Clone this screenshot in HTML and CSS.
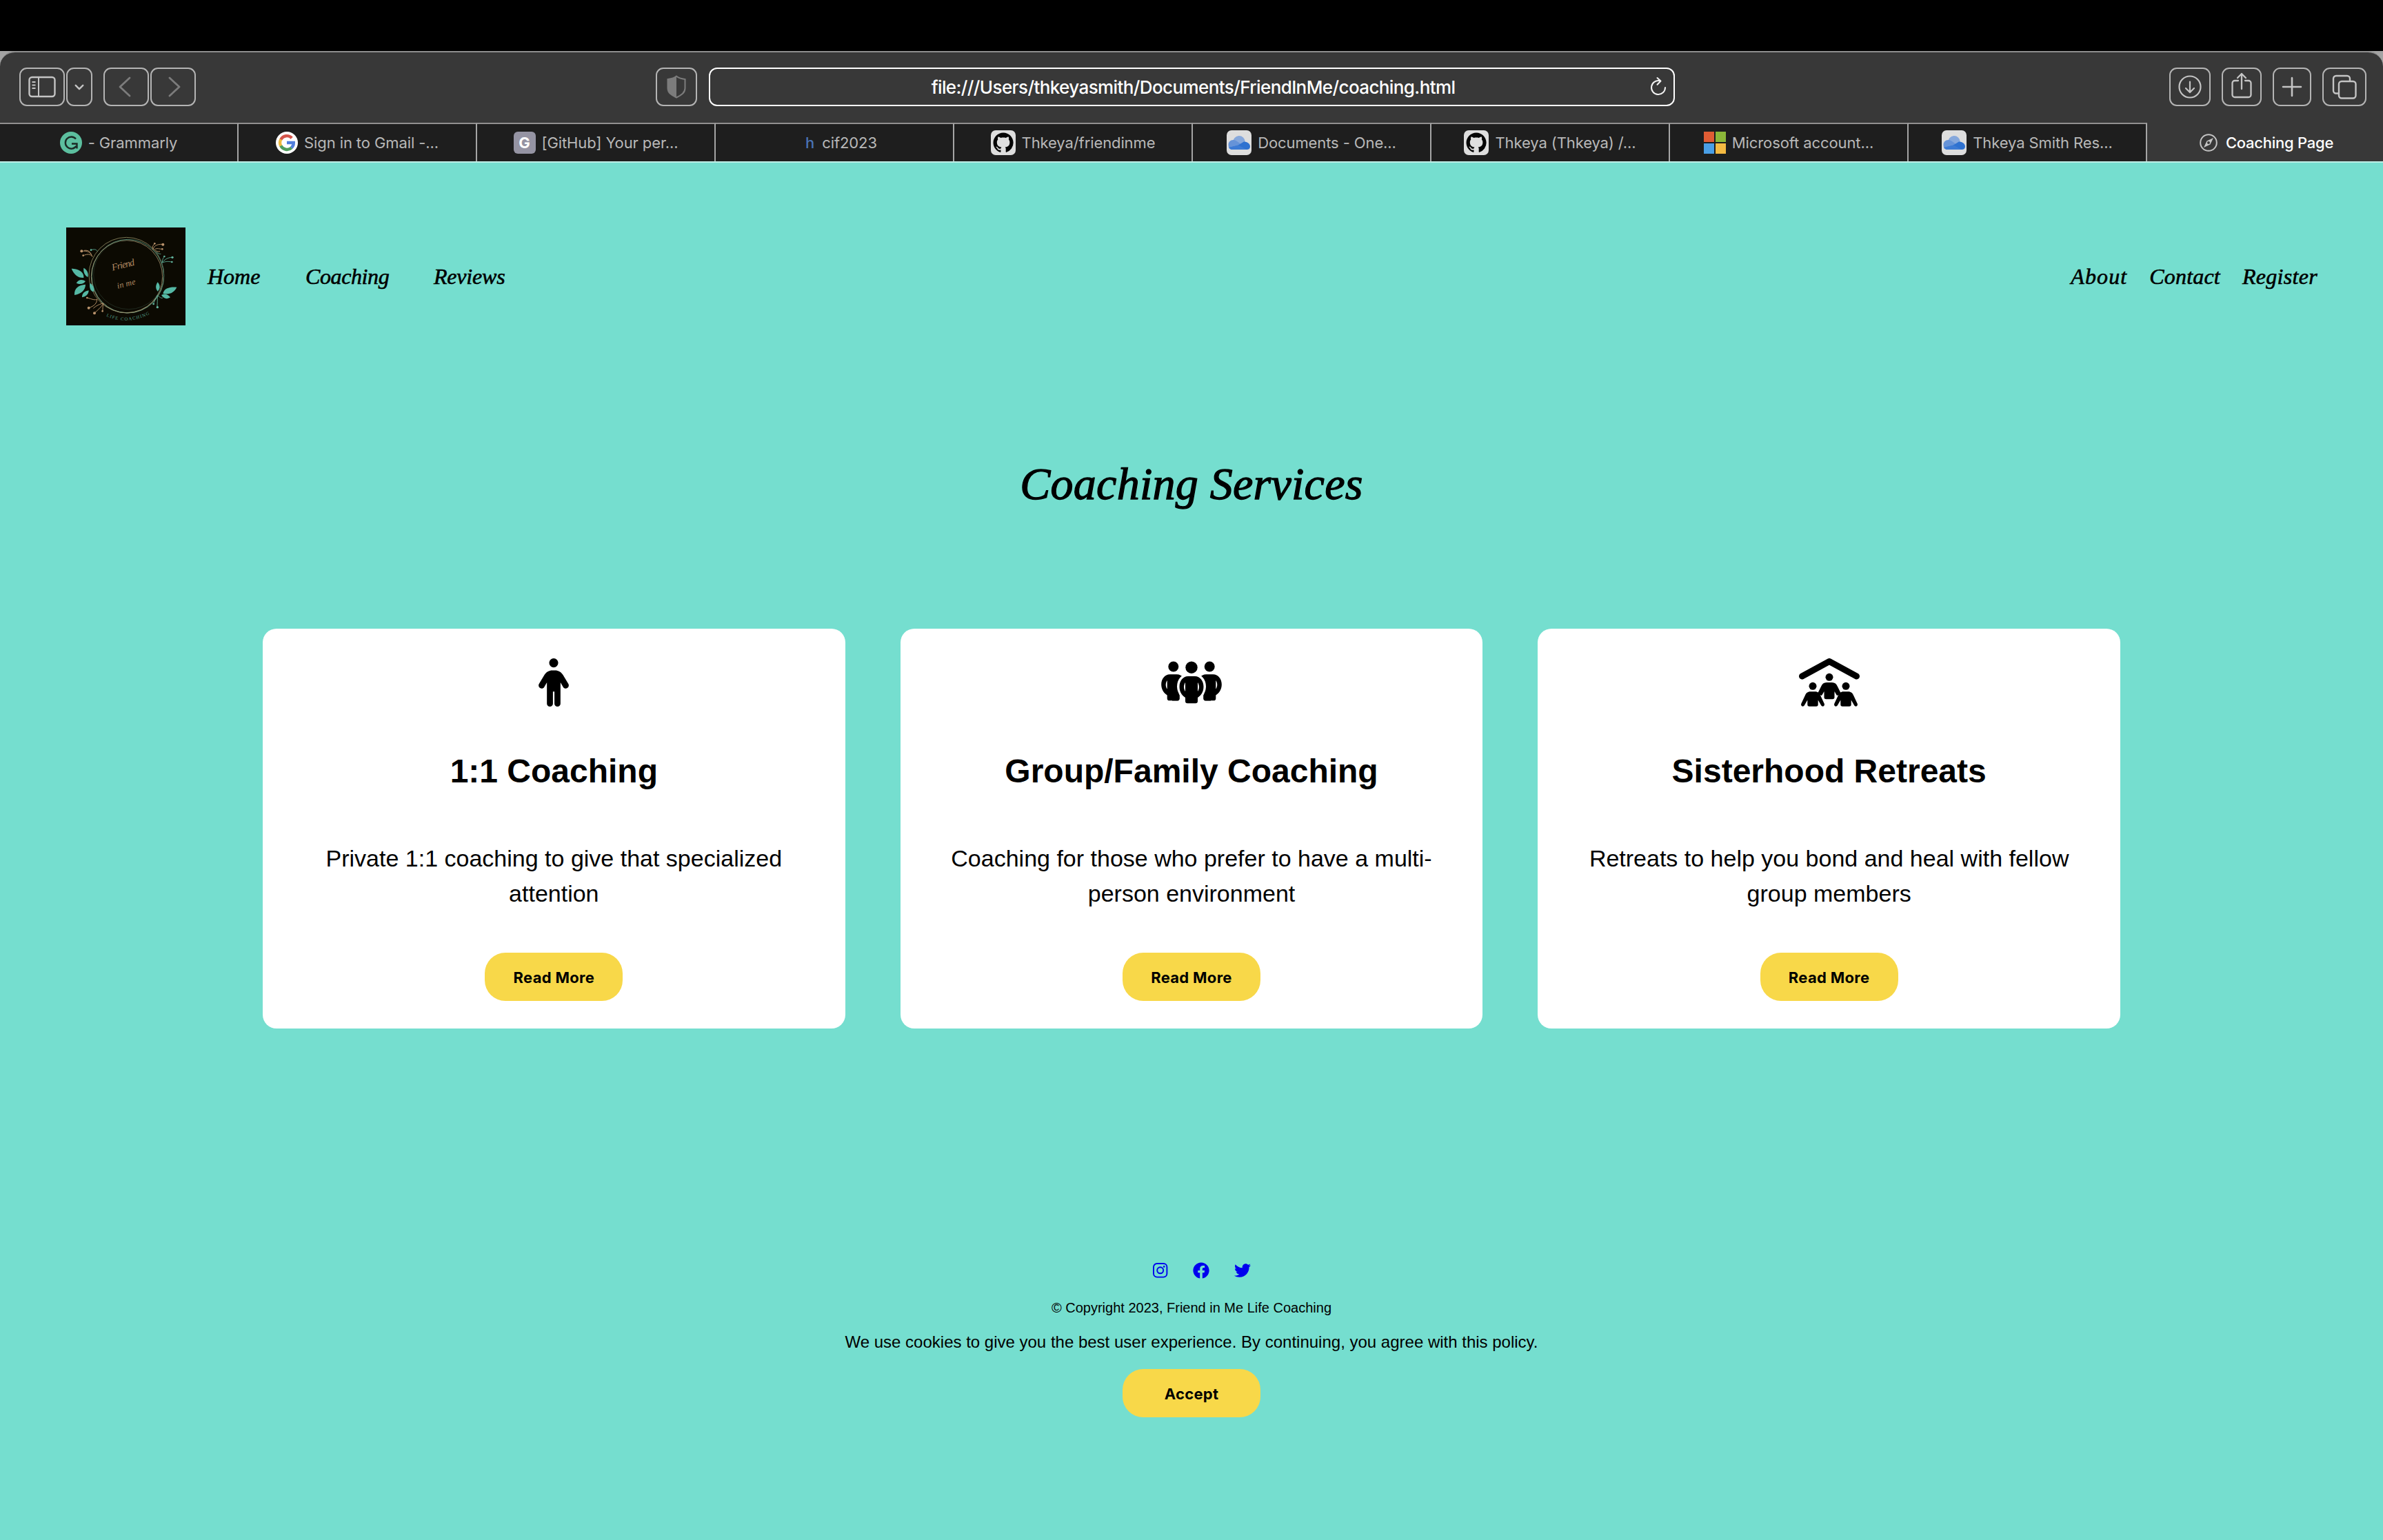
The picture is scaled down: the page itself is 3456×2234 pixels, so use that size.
FILE: index.html
```html
<!DOCTYPE html>
<html lang="en">
<head>
<meta charset="utf-8">
<title>Coaching Page</title>
<link rel="stylesheet" href="styles.css">
</head>
<body>
<svg class="defs" width="0" height="0" aria-hidden="true">
  <symbol id="octocat" viewBox="0 0 36 36">
    <rect width="36" height="36" rx="7" fill="#dedede"/>
    <path transform="translate(3.5 3.5) scale(1.82)" fill="#050505" d="M8 0C3.58 0 0 3.58 0 8c0 3.54 2.29 6.53 5.47 7.59.4.07.55-.17.55-.38 0-.19-.01-.82-.01-1.49-2.01.37-2.53-.49-2.69-.94-.09-.23-.48-.94-.82-1.13-.28-.15-.68-.52-.01-.53.63-.01 1.08.58 1.23.82.72 1.21 1.87.87 2.33.66.07-.52.28-.87.51-1.07-1.78-.2-3.64-.89-3.64-3.95 0-.87.31-1.59.82-2.15-.08-.2-.36-1.02.08-2.12 0 0 .67-.21 2.2.82.64-.18 1.32-.27 2-.27s1.36.09 2 .27c1.53-1.04 2.2-.82 2.2-.82.44 1.1.16 1.92.08 2.12.51.56.82 1.27.82 2.15 0 3.07-1.87 3.75-3.65 3.95.29.25.54.73.54 1.48 0 1.07-.01 1.93-.01 2.2 0 .21.15.46.55.38A8.01 8.01 0 0 0 16 8c0-4.42-3.58-8-8-8z"/>
  </symbol>
  <symbol id="onedrive" viewBox="0 0 36 36">
    <rect width="36" height="36" rx="7" fill="#dedede"/>
    <path d="M9 18a9 9.500 0 0 1 18-1L30 28H6z" fill="#86a8dc"/>
    <path d="M8.500 28a6.500 6.500 0 0 1-6-7c0-4 3-7 7-7 3 0 5 1.500 7 3l12 9-2 2z" fill="#6693d8"/>
    <path d="M16 22l9-5.500c5 0 9 3 9 7 0 3-2 4.500-5 4.500H9c-3 0-5-1.500-5.500-3z" fill="#2f72d0"/>
    <path d="M17 21.500l12 6.500H8.500c-2.500 0-4.500-1-5.500-3z" fill="#3d7bd4"/>
  </symbol>
</svg>

<div class="menubar"></div>
<div class="browser">
  <div class="toolbar">
    <div class="tools tools-left">
      <span class="tool w66"><svg width="40" height="32" viewBox="0 0 40 32" fill="none" stroke="#c4c4c4" stroke-width="2.400"><rect x="1.500" y="2" width="37" height="28" rx="4"/><path d="M15 2v28M5.500 9h5M5.500 13.500h5M5.500 18h5" stroke-width="2"/></svg></span>
      <span class="tool w38"><svg width="14" height="9" viewBox="0 0 16 10" fill="none" stroke="#c4c4c4" stroke-width="2.800" stroke-linecap="round" stroke-linejoin="round"><path d="M2 2l6 6 6-6"/></svg></span>
      <span class="tool w66 back"><svg width="18" height="30" viewBox="0 0 18 30" fill="none" stroke="#7c7c7c" stroke-width="2.800" stroke-linecap="round" stroke-linejoin="round"><path d="M16 2L2 15l14 13"/></svg></span>
      <span class="tool w66 forward"><svg width="18" height="30" viewBox="0 0 18 30" fill="none" stroke="#7c7c7c" stroke-width="2.800" stroke-linecap="round" stroke-linejoin="round"><path d="M2 2l14 13L2 28"/></svg></span>
    </div>
    <div class="tools tools-mid">
      <span class="tool w60"><svg width="28" height="34" viewBox="0 0 28 34"><path d="M14 1.500C11 4 7 5.300 1.500 6v13c0 6.500 5 10 12.500 13.500C21.500 29 26.500 25.500 26.500 19V6C21 5.300 17 4 14 1.500z" fill="none" stroke="#7c7c7c" stroke-width="2"/><path d="M14 1.500C11 4 7 5.300 1.500 6v13c0 6.500 5 10 12.500 13.500z" fill="#7c7c7c"/></svg></span>
      <div class="address"><span class="url">file:///Users/thkeyasmith/Documents/FriendInMe/coaching.html</span><svg class="reload" width="24" height="28" viewBox="0 0 24 28" fill="none" stroke="#f2f2f2" stroke-width="2" stroke-linecap="round" stroke-linejoin="round"><path d="M14 6.200A10 10 0 1 0 22 16M10.500 2l5 4.500-5 5.200"/></svg></div>
    </div>
    <div class="tools tools-right">
      <span class="tool w60"><svg width="34" height="34" viewBox="0 0 34 34" fill="none" stroke="#c4c4c4" stroke-width="2.200" stroke-linecap="round" stroke-linejoin="round"><circle cx="17" cy="17" r="15.500"/><path d="M17 9.500v15M11 19l6 6 6-6"/></svg></span>
      <span class="tool w58 share"><svg width="30" height="38" viewBox="0 0 30 38" fill="none" stroke="#c4c4c4" stroke-width="2.300" stroke-linecap="round" stroke-linejoin="round"><path d="M10 12H5a3.500 3.500 0 0 0-3.500 3.500v17A3.500 3.500 0 0 0 5 36h20a3.500 3.500 0 0 0 3.500-3.500v-17A3.500 3.500 0 0 0 25 12h-5M15 24V2M9 8l6-6 6 6"/></svg></span>
      <span class="tool w56"><svg width="30" height="30" viewBox="0 0 30 30" fill="none" stroke="#c4c4c4" stroke-width="2.600" stroke-linecap="round"><path d="M15 2v26M2 15h26"/></svg></span>
      <span class="tool w64"><svg width="36" height="36" viewBox="0 0 36 36" fill="none" stroke="#c4c4c4" stroke-width="2.400" stroke-linejoin="round"><rect x="10" y="10" width="24.500" height="24.500" rx="4"/><path d="M10 27.500H6A4 4 0 0 1 2 23.500V6a4 4 0 0 1 4-4h16a4 4 0 0 1 4 4v4"/></svg></span>
    </div>
  </div>

  <div class="tabs">
    <div class="tab"><svg width="32" height="32" viewBox="0 0 32 32"><circle cx="16" cy="16" r="16" fill="#5cbf9f"/><path d="M23 10.500A8.600 8.600 0 1 0 23.500 21M17 17.500h7.500v7" fill="none" stroke="#1b2b26" stroke-width="2.400"/></svg><span>- Grammarly</span></div>
    <div class="tab"><svg width="32" height="32" viewBox="0 0 32 32"><circle cx="16" cy="16" r="16" fill="#fff"/><g fill="none" stroke-width="4.400"><path d="M23.200 9.200A9.900 9.900 0 0 0 7.300 11.500" stroke="#d4544a"/><path d="M7.300 11.300a9.900 9.900 0 0 0 0 9.400" stroke="#efb93e"/><path d="M7.300 20.500a9.900 9.900 0 0 0 15.500 2.800" stroke="#4f9d5c"/><path d="M22.700 23.400A9.900 9.900 0 0 0 25.800 16H16" stroke="#517fdd"/></g></svg><span>Sign in to Gmail -...</span></div>
    <div class="tab"><span class="letter-icon">G</span><span>[GitHub] Your per...</span></div>
    <div class="tab tab-plain"><span class="h-icon">h</span><span>cif2023</span></div>
    <div class="tab"><svg width="36" height="36"><use href="#octocat"/></svg><span>Thkeya/friendinme</span></div>
    <div class="tab"><svg width="36" height="36"><use href="#onedrive"/></svg><span>Documents - One...</span></div>
    <div class="tab"><svg width="36" height="36"><use href="#octocat"/></svg><span>Thkeya (Thkeya) /...</span></div>
    <div class="tab"><svg width="32" height="32" viewBox="0 0 32 32"><path d="M0 0h15v15H0z" fill="#e05c34"/><path d="M17 0h15v15H17z" fill="#8bb739"/><path d="M0 17h15v15H0z" fill="#4a9fe6"/><path d="M17 17h15v15H17z" fill="#f4ba42"/></svg><span>Microsoft account...</span></div>
    <div class="tab"><svg width="36" height="36"><use href="#onedrive"/></svg><span>Thkeya Smith Res...</span></div>
    <div class="tab active"><svg width="26" height="26" viewBox="0 0 26 26" fill="none" stroke="#c4c4c4" stroke-width="2"><circle cx="13" cy="13" r="11.800"/><path fill="#c4c4c4" stroke="none" fill-rule="evenodd" d="M20 6l-4.500 9.500L6 20l4.500-9.500zM13 11a2 2 0 1 0 0 4 2 2 0 0 0 0-4z"/></svg><span>Coaching Page</span></div>
  </div>
</div>

<div class="page">
  <header class="site-header">
    <svg class="logo" viewBox="0 0 519 426" preserveAspectRatio="none">
      <rect width="519" height="426" fill="#0c0a02"/>
      <g fill="none" stroke-width="2.500">
        <ellipse cx="262" cy="207" rx="163" ry="164" stroke="#8f8a63"/>
        <ellipse cx="268" cy="212" rx="157" ry="160" stroke="#5fa58c"/>
        <ellipse cx="264" cy="214" rx="155" ry="158" stroke="#a59470"/>
        <ellipse cx="272" cy="205" rx="153" ry="151" stroke="#33493a" stroke-width="1.500"/>
      </g>
      <g fill="none" stroke="#b08c64" stroke-width="3">
        <path d="M114 128C108 108 92 100 68 103M112 124C98 112 88 118 74 122M110 120C104 104 96 98 78 100"/>
        <path d="M378 98C380 84 388 72 421 73M384 96C396 88 404 94 418 94M376 94C374 82 380 74 385 70M388 100C398 106 402 106 408 104"/>
        <path d="M134 312C126 318 112 312 92 306M134 312C134 330 122 342 98 350M162 330C150 350 138 358 124 372M162 330C158 344 160 354 158 364M162 330C138 334 122 348 118 352"/>
      </g>
      <g fill="none" stroke="#62b59e" stroke-width="2.500">
        <path d="M416 154C426 142 440 130 462 130M416 154C434 146 446 148 460 150M418 150C418 138 424 130 428 126M392 106C400 114 408 116 412 115M136 104C130 94 122 94 108 98"/>
        <path d="M396 296C398 316 396 328 396 346M396 296C388 312 382 322 380 334M396 296C408 302 412 310 420 306"/>
      </g>
      <g fill="#b9936c"><circle cx="67" cy="103" r="6"/><circle cx="74" cy="122" r="4"/><circle cx="421" cy="74" r="6"/><circle cx="418" cy="94" r="4"/><circle cx="385" cy="70" r="4"/><circle cx="91" cy="306" r="4"/><circle cx="98" cy="350" r="6"/><circle cx="123" cy="373" r="6"/><circle cx="158" cy="364" r="4"/></g>
      <g fill="#62b59e"><circle cx="462" cy="130" r="5"/><circle cx="460" cy="150" r="4"/><circle cx="427" cy="126" r="4"/><circle cx="397" cy="347" r="5"/><circle cx="380" cy="333" r="4"/><circle cx="108" cy="98" r="4"/></g>
      <g fill="#55b8a4">
        <path d="M23 179C50 180 78 190 76 219C50 220 34 204 23 179z"/>
        <path d="M76 176C92 184 98 200 94 216C80 208 74 194 76 176z"/>
        <path d="M44 242C52 226 70 224 84 234C76 246 60 250 44 242z"/>
        <path d="M36 294C34 264 54 250 84 248C84 272 66 288 36 294z"/>
        <path d="M69 304C68 286 82 276 98 274C98 292 84 302 69 304z"/>
        <path d="M103 242C118 250 124 266 119 280C104 276 100 260 103 242z"/>
        <path d="M398 238C410 252 410 266 398 278C388 266 388 252 398 238z"/>
        <path d="M421 288C426 264 450 258 481 260C470 284 450 294 421 288z"/>
        <path d="M414 294C430 286 444 292 453 304C438 314 424 310 414 294z"/>
      </g>
      <g class="logo-script" fill="#b48c64">
        <text transform="translate(202 188) rotate(-14)" font-size="42" textLength="100">Friend</text>
        <text transform="translate(224 266) rotate(-14)" font-size="36" textLength="82">in me</text>
      </g>
      <path id="arc" d="M174 386Q262 430 376 372" fill="none"/>
      <text class="logo-caps" fill="#4f9c86" font-size="20" textLength="196"><textPath href="#arc">LIFE COACHING</textPath></text>
    </svg>
    <nav class="nav-main"><a class="n-home">Home</a><a class="n-coach">Coaching</a><a class="n-rev">Reviews</a></nav>
    <nav class="nav-side"><a class="n-about">About</a><a class="n-contact">Contact</a><a class="n-reg">Register</a></nav>
  </header>

  <h1 class="title">Coaching Services</h1>

  <main class="cards">
    <section class="card">
      <svg width="44" height="70" viewBox="0 0 320 512"><path d="M112 48a48 48 0 1 1 96 0a48 48 0 1 1-96 0zm40 304V480c0 17.700-14.300 32-32 32s-32-14.300-32-32V256.900L59.400 304.500c-9.100 15.100-28.800 20-43.900 10.900s-20-28.800-10.900-43.900l58.300-97c17.400-28.900 48.600-46.600 82.300-46.600h29.700c33.700 0 64.900 17.700 82.300 46.600l58.300 97c9.100 15.100 4.200 34.800-10.900 43.900s-34.800 4.200-43.900-10.900L232 256.900V480c0 17.700-14.300 32-32 32s-32-14.300-32-32V352H152z"/></svg>
      <h2>1:1 Coaching</h2>
      <p>Private 1:1 coaching to give that specialized attention</p>
      <button class="btn">Read More</button>
    </section>
    <section class="card">
      <svg width="88" height="70" viewBox="0 0 88 70">
        <defs><path id="torso" fill-rule="evenodd" d="M39 26H49C56.500 26 61.500 33 61.500 41C61.500 48 58.500 53.500 53 57V62A3.200 3.200 0 0 1 49.800 65.200H38.200A3.200 3.200 0 0 1 35 62V57C29.500 53.500 26.500 48 26.500 41C26.500 33 31.500 26 39 26zM35 35C32.400 39 32.400 44 35 48zM53 35V48C55.600 44 55.600 39 53 35z"/></defs>
        <circle cx="17.800" cy="12" r="7.500"/><circle cx="70.200" cy="12" r="7.500"/><circle cx="44" cy="13.200" r="8.700"/>
        <use href="#torso" transform="translate(-26.300 -2.200) scale(1 .975)"/>
        <use href="#torso" transform="translate(26.300 -2.200) scale(1 .975)"/>
        <path d="M39 26H49C56.500 26 61.500 33 61.500 41C61.500 48 58.500 53.500 53 57V65H35V57C29.500 53.500 26.500 48 26.500 41C26.500 33 31.500 26 39 26z" fill="#fff" stroke="#fff" stroke-width="7"/>
        <path d="M26.400 53v5.500a3 3 0 0 1-3 3H16V45h7zM61.600 53v5.500a3 3 0 0 0 3 3H72V45h-7z"/>
        <use href="#torso"/>
      </svg>
      <h2>Group/Family Coaching</h2>
      <p>Coaching for those who prefer to have a multi-person environment</p>
      <button class="btn">Read More</button>
    </section>
    <section class="card">
      <svg width="88" height="70" viewBox="0 0 88 70">
        <defs><path id="sitter" d="M16.500 48.300H23.500C27.500 48.300 29.700 50.500 31.200 54L36.600 65.500C38.200 69 34 71.500 32 68L27.700 60.500V67A2.800 2.800 0 0 1 25 69.800H15A2.800 2.800 0 0 1 12.300 67V60.500L8 68C6 71.500 1.800 69 3.400 65.500L8.800 54C10.300 50.500 12.500 48.300 16.500 48.300z"/></defs>
        <path d="M4.500 26L44 4.500L83.500 26" fill="none" stroke="#000" stroke-width="9" stroke-linecap="round" stroke-linejoin="round"/>
        <circle cx="44" cy="27.300" r="5.500"/><circle cx="20" cy="40.300" r="5.500"/><circle cx="68" cy="40.300" r="5.500"/>
        <path d="M40 35H48C52 35 54.500 37 56 41L61.500 52L55 54L51.500 48V56.500A2.800 2.800 0 0 1 48.700 59.300H39.300A2.800 2.800 0 0 1 36.500 56.500V48L33 54L26.500 52L32 41C33.500 37 36 35 40 35z"/>
        <use href="#sitter"/><use href="#sitter" x="48"/>
      </svg>
      <h2>Sisterhood Retreats</h2>
      <p>Retreats to help you bond and heal with fellow group members</p>
      <button class="btn">Read More</button>
    </section>
  </main>

  <footer class="site-footer">
    <div class="social">
      <svg width="22" height="24" viewBox="0 0 22 24" fill="none" stroke="#00e" stroke-width="1.900"><rect x="1" y="2" width="19.400" height="19.600" rx="5"/><circle cx="10.700" cy="11.800" r="4.500"/><circle cx="16.200" cy="6.400" r="1.300" fill="#00e" stroke="none"/></svg>
      <svg width="24" height="24" viewBox="0 0 512 512" fill="#00e"><path d="M504 256C504 119 393 8 256 8S8 119 8 256c0 123.780 90.690 226.380 209.250 245V327.690h-63V256h63v-54.640c0-62.150 37-96.480 93.670-96.480 27.140 0 55.520 4.840 55.520 4.840v61h-31.280c-30.800 0-40.410 19.120-40.410 38.730V256h68.780l-11 71.690h-57.780V501C413.310 482.380 504 379.780 504 256z"/></svg>
      <svg width="24" height="24" viewBox="0 0 512 512" fill="#00e"><path d="M459.370 151.716c.325 4.548.325 9.097.325 13.645 0 138.720-105.583 298.558-298.558 298.558-59.452 0-114.680-17.219-161.137-47.106 8.447.974 16.568 1.299 25.340 1.299 49.055 0 94.213-16.568 130.274-44.832-46.132-.975-84.792-31.188-98.112-72.772 6.498.974 12.995 1.624 19.818 1.624 9.421 0 18.843-1.300 27.614-3.573-48.081-9.747-84.143-51.980-84.143-102.985v-1.299c13.969 7.797 30.214 12.670 47.431 13.319-28.264-18.843-46.781-51.005-46.781-87.391 0-19.492 5.197-37.360 14.294-52.954 51.655 63.675 129.300 105.258 216.365 109.807-1.624-7.797-2.599-15.918-2.599-24.040 0-57.828 46.782-104.934 104.934-104.934 30.213 0 57.502 12.670 76.670 33.137 23.715-4.548 46.456-13.320 66.599-25.340-7.798 24.366-24.366 44.833-46.132 57.827 21.117-2.273 41.584-8.122 60.426-16.243-14.292 20.791-32.161 39.308-52.628 54.253z"/></svg>
    </div>
    <p class="copyright">© Copyright 2023, Friend in Me Life Coaching</p>
    <p class="cookies">We use cookies to give you the best user experience. By continuing, you agree with this policy.</p>
    <button class="btn">Accept</button>
  </footer>
</div>
</body>
</html>
```

FILE: styles.css
```css
* { box-sizing: border-box; }

body {
  margin: 0;
  min-height: 2234px;
  display: flex;
  flex-direction: column;
  background: #75decf;
  color: #000;
  font-family: "Liberation Sans", Arial, sans-serif;
}

h1, h2, p { margin: 0; }
svg { display: block; flex: none; }
.defs { position: absolute; }

/* Browser window */
.menubar { height: 74px; background: #000; }
.browser { background: #a3a3a3; font-family: Inter, sans-serif; }
.toolbar {
  height: 104px;
  padding: 22px 24px 0 28px;
  display: flex;
  justify-content: space-between;
  background: #383838;
  border-top: 2px solid #8e8e8e;
  border-radius: 22px 22px 0 0;
}
.tools { display: flex; align-items: flex-start; }
.tool {
  height: 56px;
  display: flex;
  align-items: center;
  justify-content: center;
  border: 2px solid #b4b4b4;
  border-radius: 11px;
}
.w38 { width: 38px; }
.w56 { width: 56px; }
.w58 { width: 58px; }
.w60 { width: 60px; }
.w64 { width: 64px; }
.w66 { width: 66px; }
.tools-left { gap: 2px; width: 923px; }
.back { margin-left: 14px; padding-right: 4px; }
.forward { padding-left: 4px; }
.tools-mid { gap: 17px; flex: 1; }
.tools-right { gap: 16px; }
.share { padding-bottom: 5px; }
.address {
  width: 1401px;
  height: 56px;
  padding: 0 10px 0 38px;
  display: flex;
  align-items: center;
  border: 2px solid #fff;
  border-radius: 12px;
  color: #fff;
}
.url { flex: 1; text-align: center; font-size: 26px; font-weight: 500; letter-spacing: -0.6px; }
.reload { margin-bottom: 3px; }

.tabs {
  height: 58px;
  display: flex;
  background: #383838;
  border-bottom: 2px solid #bdefe7;
}
.tab {
  width: 346px;
  display: flex;
  align-items: center;
  justify-content: center;
  gap: 9px;
  background: #1e1e1e;
  border-top: 2px solid #929090;
  border-right: 2px solid #a5a5a5;
  color: #b8b8b8;
  font-size: 22px;
  font-weight: 400;
  letter-spacing: -0.1px;
  white-space: nowrap;
}
.tab-plain { padding-left: 20px; gap: 11px; }
.tab.active {
  width: 342px;
  padding-left: 6px;
  gap: 12px;
  background: #383838;
  border-color: transparent;
  color: #fff;
  font-weight: 500;
  letter-spacing: -0.25px;
}
.letter-icon {
  width: 32px;
  height: 32px;
  line-height: 33px;
  text-align: center;
  border-radius: 6px;
  background: #9594a3;
  color: #fff;
  font-weight: 700;
}
.h-icon { color: #4a73b5; font-weight: 500; }

/* Page header */
.site-header {
  height: 236px;
  padding: 94px 95px 0 96px;
  display: flex;
  align-items: center;
}
.logo { width: 173px; height: 142px; }
.logo-script { font-family: "Liberation Serif", serif; font-style: italic; }
.logo-caps { font-family: "Liberation Serif", serif; }
.site-header nav {
  display: flex;
  font: italic 32px/36px "Liberation Serif", serif;
  -webkit-text-stroke: 0.6px #000;
}
.nav-main { gap: 65px; margin-left: 32px; }
.nav-side { gap: 32px; margin-left: auto; }
.n-home { width: 77px; }
.n-coach { width: 121px; letter-spacing: -0.4px; }
.n-rev { letter-spacing: -0.2px; }
.n-about { letter-spacing: 1.1px; }
.n-contact { letter-spacing: 0.2px; }
.n-reg { letter-spacing: 0.3px; }

.title {
  margin-top: 192px;
  text-align: center;
  font: italic 66px/76px "Liberation Serif", serif;
  letter-spacing: 0.25px;
  -webkit-text-stroke: 1.3px #000;
}

/* Service cards */
.cards {
  width: 2694px;
  margin: 172px auto 0;
  display: grid;
  grid-template-columns: repeat(3, 1fr);
  gap: 80px;
}
.card {
  height: 580px;
  padding: 43px 60px 40px;
  display: flex;
  flex-direction: column;
  align-items: center;
  background: #fff;
  border-radius: 20px;
  text-align: center;
}
.card h2 { margin-top: 65px; font-size: 48px; line-height: 58px; }
.card p { margin-top: 72px; font-size: 34px; line-height: 51px; }
.card .btn { margin-top: auto; }
.btn {
  width: 200px;
  height: 70px;
  padding: 2px 0 0;
  border: 0;
  border-radius: 30px;
  background: #f8d849;
  color: #000;
  font: 700 22px/26px Inter, sans-serif;
  letter-spacing: 0.3px;
}

/* Footer */
.site-footer {
  margin-top: 339px;
  display: flex;
  flex-direction: column;
  align-items: center;
}
.social { display: flex; gap: 36px; padding-left: 29px; }
.copyright { margin-top: 30px; font-size: 20px; line-height: 24px; }
.cookies { margin-top: 24px; font-size: 24px; line-height: 28px; }
.site-footer .btn { margin-top: 25px; }
```
